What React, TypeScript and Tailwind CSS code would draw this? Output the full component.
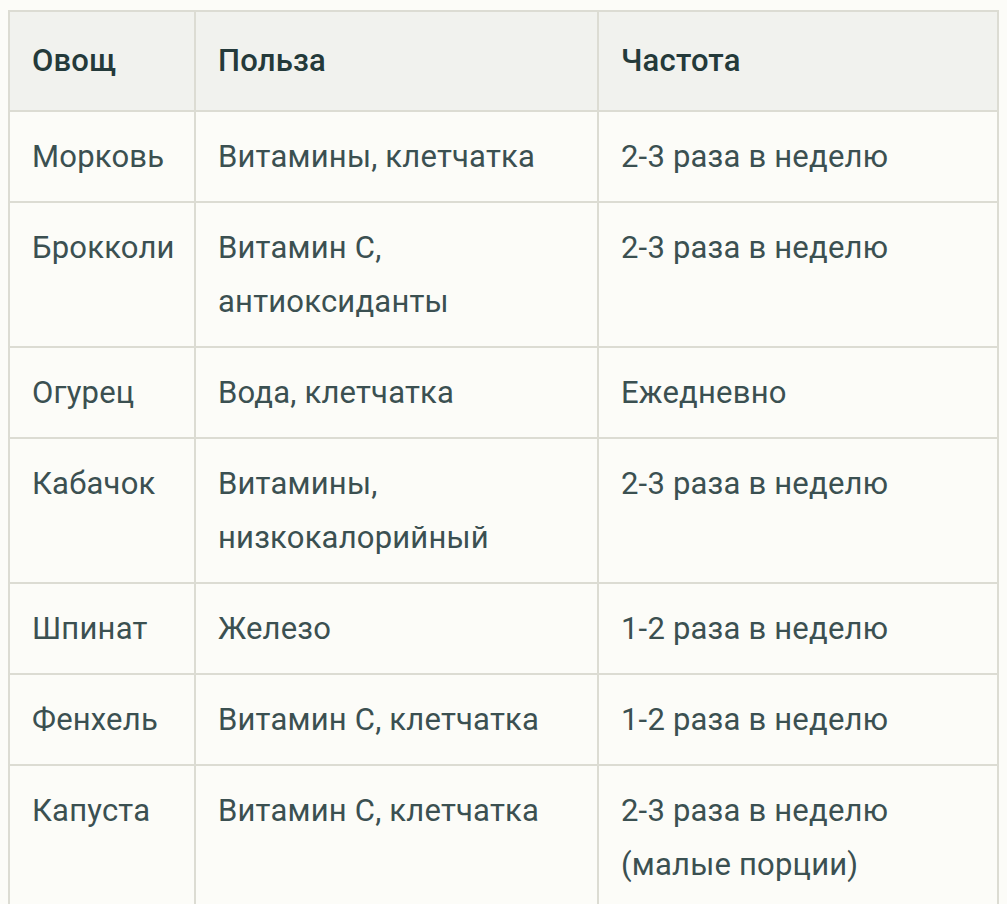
import React from 'react';

const rows: [string, string[], string[]][] = [
  ['Морковь', ['Витамины, клетчатка'], ['2-3 раза в неделю']],
  ['Брокколи', ['Витамин C,', 'антиоксиданты'], ['2-3 раза в неделю']],
  ['Огурец', ['Вода, клетчатка'], ['Ежедневно']],
  ['Кабачок', ['Витамины,', 'низкокалорийный'], ['2-3 раза в неделю']],
  ['Шпинат', ['Железо'], ['1-2 раза в неделю']],
  ['Фенхель', ['Витамин C, клетчатка'], ['1-2 раза в неделю']],
  ['Капуста', ['Витамин C, клетчатка'], ['2-3 раза в неделю', '(малые порции)']],
];

const cell = 'border-2 border-[#dcdcd3] px-[22px] align-top';

export default function App() {
  return (
    <div className="min-h-screen bg-[#fcfcf8] pt-[10px] pl-[8px] font-['Roboto',sans-serif] text-[31px] leading-[54px] tracking-[0.2px] text-[#3b5051]">
      <table className="border-collapse w-[991px] table-fixed">
        <colgroup>
          <col className="w-[186px]" />
          <col className="w-[403px]" />
          <col />
        </colgroup>
        <thead>
          <tr className="bg-[#f1f2ee] text-[#243a3a] text-left">
            <th className={`${cell} py-[22px] font-medium`}>Овощ</th>
            <th className={`${cell} py-[22px] font-medium`}>Польза</th>
            <th className={`${cell} py-[22px] font-medium`}>Частота</th>
          </tr>
        </thead>
        <tbody className="bg-[#fcfcf8]">
          {rows.map(([veg, benefit, freq]) => (
            <tr key={veg}>
              <td className={`${cell} py-[17.5px]`}>{veg}</td>
              <td className={`${cell} py-[17.5px]`}>
                {benefit.map((l) => (
                  <div key={l}>{l}</div>
                ))}
              </td>
              <td className={`${cell} py-[17.5px]`}>
                {freq.map((l) => (
                  <div key={l}>{l}</div>
                ))}
              </td>
            </tr>
          ))}
        </tbody>
      </table>
    </div>
  );
}
